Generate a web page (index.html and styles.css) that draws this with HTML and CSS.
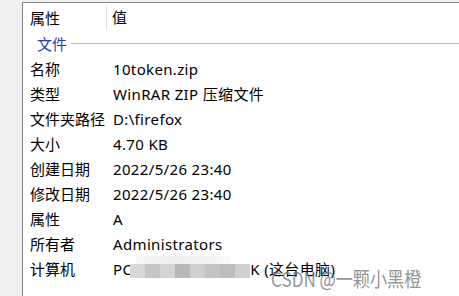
FILE: index.html
```html
<!DOCTYPE html>
<html lang="zh">
<head>
<meta charset="utf-8">
<link rel="stylesheet" href="styles.css">
</head>
<body>
<div class="panel">
  <div class="head">
    <div class="hcell hlabel">属性</div>
    <div class="hcell hvalue">值</div>
  </div>
  <div class="group"><span class="gname">文件</span><span class="gline"></span></div>
  <div class="row"><span class="k">名称</span><span class="v">10token.zip</span></div>
  <div class="row"><span class="k">类型</span><span class="v">WinRAR ZIP 压缩文件</span></div>
  <div class="row"><span class="k">文件夹路径</span><span class="v">D:\firefox</span></div>
  <div class="row"><span class="k">大小</span><span class="v">4.70 KB</span></div>
  <div class="row"><span class="k">创建日期</span><span class="v">2022/5/26 23:40</span></div>
  <div class="row"><span class="k">修改日期</span><span class="v">2022/5/26 23:40</span></div>
  <div class="row"><span class="k">属性</span><span class="v">A</span></div>
  <div class="row"><span class="k">所有者</span><span class="v">Administrators</span></div>
  <div class="row"><span class="k">计算机</span><span class="v">PC<span class="mosaic"><span class="fade"></span><span class="blocks"><i class="m1"></i><i class="m2"></i><i class="m3"></i><i class="m4"></i><i class="m5"></i><i class="m6"></i><i class="m7"></i><i class="m8"></i></span></span>K (这台电脑)</span></div>
</div>
<div class="watermark">CSDN @一颗小黑橙</div>
</body>
</html>
```
FILE: styles.css
```css
html, body { margin: 0; height: 100%; }
body {
  background: #f0f0f0;
  padding: 2px 0 0 22px;
  box-sizing: border-box;
  font-family: "Noto Sans", "Noto Sans CJK SC", sans-serif;
  font-size: 15px;
  color: #000;
  overflow: hidden;
  position: relative;
}
.panel {
  background: #fff;
  border-left: 1px solid #858585;
  border-top: 1px solid #858585;
  height: 100%;
  box-sizing: border-box;
}
.head { display: flex; height: 27px; align-items: center; }
.hcell { height: 100%; display: flex; align-items: center; }
.hlabel { width: 84px; padding-left: 7px; box-sizing: border-box; border-right: 1px solid #e5e5e5; height: 24px; margin-top: 2px; }
.hvalue { padding-left: 5px; }
.group { display: flex; align-items: center; height: 26px; padding-left: 14px; }
.gname { color: #1e3fae; margin-right: 4px; }
.gline { flex: 1; height: 1px; background: #adbfdf; margin-top: 1px; }
.row { display: flex; align-items: center; height: 25px; }
.k { width: 90px; padding-left: 7px; box-sizing: border-box; flex: none; }
.v { display: flex; align-items: center; white-space: pre; letter-spacing: 0.35px; }
.mosaic { display: inline-flex; flex-direction: column; margin: -6px 0 -2px -2px; }
.fade { display: block; width: 95px; height: 8px; margin-left: 6px; background: linear-gradient(90deg, #f7f7f7, #eeeeee 40%, #f4f4f4 80%, #fafafa); }
.blocks { display: flex; height: 14px; }
.blocks i { width: 15px; height: 14px; display: block; }
.m1 { background: #d8d8d8; }
.m2 { background: #c6c6c6; }
.m3 { background: #d4d4d4; }
.m4 { background: #b8b8b8; }
.m5 { background: #cfcfcf; }
.m6 { background: #c4c4c4; }
.m7 { background: #bdbdbd; }
.m8 { background: #d0d0d0; }
.watermark {
  position: absolute;
  left: 271px;
  top: 263px;
  font-family: "Noto Sans CJK SC", sans-serif;
  font-weight: 400;
  font-size: 18px;
  color: rgba(120, 120, 120, 0.8);
  white-space: nowrap;
  transform: scale(0.95, 1.15);
  transform-origin: left top;
}
```
